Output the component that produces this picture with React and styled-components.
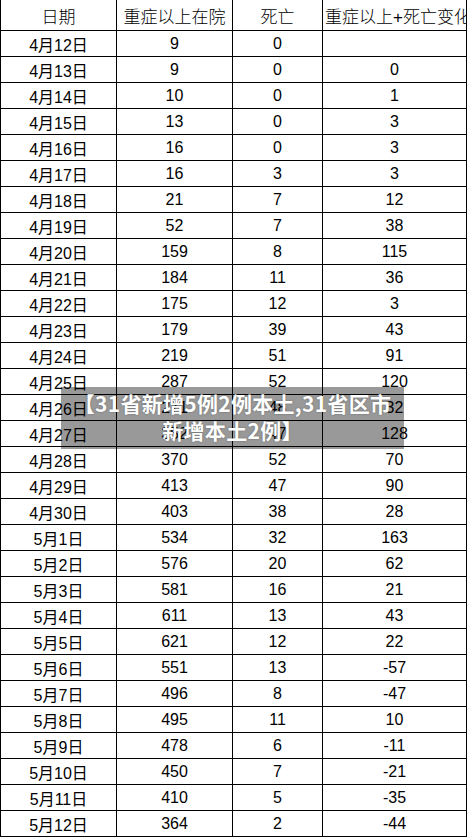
import React from "react";
import styled, { createGlobalStyle } from "styled-components";

const rows = [
  ["4月12日", "9", "0", ""],
  ["4月13日", "9", "0", "0"],
  ["4月14日", "10", "0", "1"],
  ["4月15日", "13", "0", "3"],
  ["4月16日", "16", "0", "3"],
  ["4月17日", "16", "3", "3"],
  ["4月18日", "21", "7", "12"],
  ["4月19日", "52", "7", "38"],
  ["4月20日", "159", "8", "115"],
  ["4月21日", "184", "11", "36"],
  ["4月22日", "175", "12", "3"],
  ["4月23日", "179", "39", "43"],
  ["4月24日", "219", "51", "91"],
  ["4月25日", "287", "52", "120"],
  ["4月26日", "271", "48", "32"],
  ["4月27日", "352", "47", "128"],
  ["4月28日", "370", "52", "70"],
  ["4月29日", "413", "47", "90"],
  ["4月30日", "403", "38", "28"],
  ["5月1日", "534", "32", "163"],
  ["5月2日", "576", "20", "62"],
  ["5月3日", "581", "16", "21"],
  ["5月4日", "611", "13", "43"],
  ["5月5日", "621", "12", "22"],
  ["5月6日", "551", "13", "-57"],
  ["5月7日", "496", "8", "-47"],
  ["5月8日", "495", "11", "10"],
  ["5月9日", "478", "6", "-11"],
  ["5月10日", "450", "7", "-21"],
  ["5月11日", "410", "5", "-35"],
  ["5月12日", "364", "2", "-44"],
];

const headers = ["日期", "重症以上在院", "死亡", "重症以上+死亡变化"];

function App() {
  return (
    <>
      <GlobalStyle />
      <Wrapper>
        <Sheet>
          {headers.map((h, i) => (
            <HeadCell key={h} $left={i === 3}>
              {h}
            </HeadCell>
          ))}
          {rows.map((r) =>
            r.map((v, i) => <Cell key={r[0] + i}>{v}</Cell>)
          )}
        </Sheet>
        <Caption>
          <span>【31省新增5例2例本土,31省区市</span>
          <span>新增本土2例】</span>
        </Caption>
      </Wrapper>
    </>
  );
}

const GlobalStyle = createGlobalStyle`
  body {
    margin: 0;
    background: #fff;
    font-family: "Liberation Sans", "Noto Sans CJK SC", sans-serif;
  }
`;

const Wrapper = styled.div`
  position: relative;
  width: 467px;
  height: 837px;
  overflow: hidden;
`;

const Sheet = styled.div`
  display: grid;
  grid-template-columns: 116px 116px 90px 144px;
  grid-template-rows: 31px repeat(31, 26px);
  border-left: 1px solid #000;
`;

const Cell = styled.div`
  display: flex;
  align-items: center;
  justify-content: center;
  border-right: 1px solid #000;
  border-bottom: 1px solid #000;
  font-size: 16px;
  color: #000;
  padding-top: 1px;
`;

const HeadCell = styled(Cell)`
  font-size: 17px;
  font-weight: 300;
  justify-content: ${(p) => (p.$left ? "flex-start" : "center")};
  padding-left: ${(p) => (p.$left ? "2px" : "0")};
  white-space: nowrap;
  overflow: hidden;
`;

const Caption = styled.div`
  position: absolute;
  left: 61px;
  top: 387px;
  width: 343px;
  height: 62px;
  background: rgba(0, 0, 0, 0.4);
  display: flex;
  flex-direction: column;
  align-items: center;
  justify-content: center;
  color: #fff;
  font-family: "Noto Sans CJK SC", sans-serif;
  font-weight: 700;
  font-size: 21px;
  letter-spacing: 0.3px;
  line-height: 27px;
  padding-bottom: 3px;
  box-sizing: border-box;
  text-shadow: 0 0 2px rgba(0, 0, 0, 0.35);
  white-space: nowrap;
`;

export default App;
